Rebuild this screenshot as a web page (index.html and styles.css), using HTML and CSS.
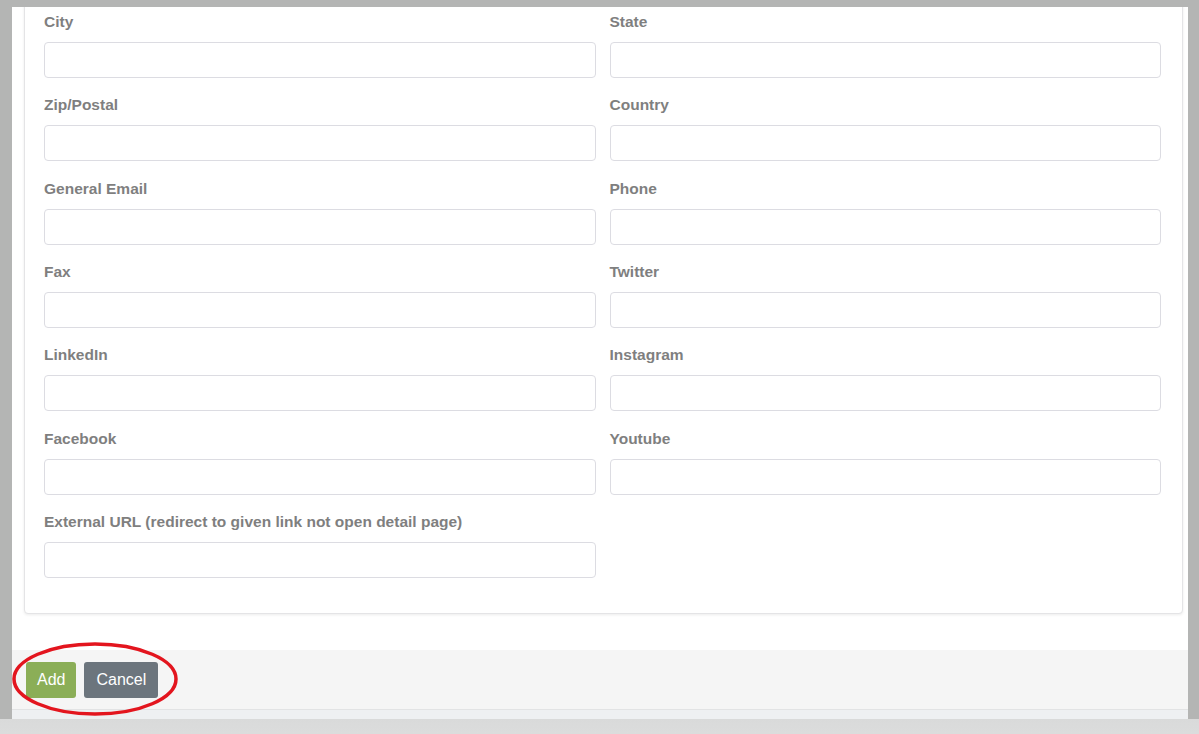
FILE: index.html
```html
<!DOCTYPE html>
<html lang="en">
<head>
    <meta charset="UTF-8">
    <meta name="viewport" content="width=device-width, initial-scale=1.0">
    <title>Add Listing</title>
    <link rel="stylesheet" href="styles.css">
</head>
<body>
    <div class="modal">
        <div class="modal-body">
            <div class="card">
                <div class="form-grid">
                    <div class="form-group">
                        <label for="city">City</label>
                        <input type="text" id="city">
                    </div>
                    <div class="form-group">
                        <label for="state">State</label>
                        <input type="text" id="state">
                    </div>
                    <div class="form-group">
                        <label for="zip">Zip/Postal</label>
                        <input type="text" id="zip">
                    </div>
                    <div class="form-group">
                        <label for="country">Country</label>
                        <input type="text" id="country">
                    </div>
                    <div class="form-group">
                        <label for="email">General Email</label>
                        <input type="email" id="email">
                    </div>
                    <div class="form-group">
                        <label for="phone">Phone</label>
                        <input type="tel" id="phone">
                    </div>
                    <div class="form-group">
                        <label for="fax">Fax</label>
                        <input type="text" id="fax">
                    </div>
                    <div class="form-group">
                        <label for="twitter">Twitter</label>
                        <input type="url" id="twitter">
                    </div>
                    <div class="form-group">
                        <label for="linkedin">LinkedIn</label>
                        <input type="url" id="linkedin">
                    </div>
                    <div class="form-group">
                        <label for="instagram">Instagram</label>
                        <input type="url" id="instagram">
                    </div>
                    <div class="form-group">
                        <label for="facebook">Facebook</label>
                        <input type="url" id="facebook">
                    </div>
                    <div class="form-group">
                        <label for="youtube">Youtube</label>
                        <input type="url" id="youtube">
                    </div>
                    <div class="form-group">
                        <label for="externalUrl">External URL (redirect to given link not open detail page)</label>
                        <input type="url" id="externalUrl">
                    </div>
                </div>
            </div>
        </div>
        <div class="modal-footer">
            <button type="submit" class="btn btn-add">Add</button>
            <button type="button" class="btn btn-cancel">Cancel</button>
            <!-- red marker drawn over the buttons -->
            <svg class="marker" width="172" height="80" viewBox="0 0 172 80">
                <ellipse cx="84" cy="38" rx="81" ry="35" fill="none" stroke="#e3151e" stroke-width="3.5"/>
            </svg>
        </div>
        <div class="modal-edge"></div>
    </div>
    <div class="page-bottom"></div>
</body>
</html>
```

FILE: styles.css
```css
body {
    margin: 0;
    padding: 7px 11px 0 12px;
    background: #b4b5b4;
    font-family: 'Liberation Sans', Arial, sans-serif;
    height: 734px;
    box-sizing: border-box;
    overflow: hidden;
}

.modal {
    background: #fff;
}

.modal-body {
    overflow: hidden;
    padding: 0 5px 36px 12px;
}

.card {
    margin-top: -20px;
    padding: 24px 21px 35px 19px;
    border: 1px solid #e4e4e6;
    border-radius: 4px;
    box-shadow: 0 1px 3px rgba(0, 0, 0, 0.08);
    background: #fff;
}

.form-grid {
    display: grid;
    grid-template-columns: 1fr 1fr;
    column-gap: 14px;
}

.form-group {
    margin-bottom: 17.33px;
}

.form-group:last-child {
    margin-bottom: 0;
}

label {
    display: block;
    font-size: 15.5px;
    line-height: 20px;
    font-weight: bold;
    color: #7f7f7f;
    margin-bottom: 10px;
}

input {
    display: block;
    width: 100%;
    height: 36px;
    box-sizing: border-box;
    border: 1px solid #dcdce2;
    border-radius: 4px;
    background: #fff;
    padding: 6px 12px;
    font-size: 14px;
}

.modal-footer {
    position: relative;
    background: #f5f5f5;
    padding: 12px 14px 11px;
    border-bottom: 1px solid #e2e3e4;
    display: flex;
    gap: 8px;
}

.btn {
    height: 36px;
    border: none;
    border-radius: 3px;
    color: #fff;
    font-family: 'Liberation Sans', Arial, sans-serif;
    font-size: 16px;
    cursor: pointer;
}

.btn-add {
    background: #8bae57;
    padding: 0 11px;
}

.btn-cancel {
    background: #6c757d;
    padding: 0 12px;
}

.marker {
    position: absolute;
    left: -1px;
    top: -9px;
}

.modal-edge {
    height: 9px;
    background: #eef0f2;
}

.page-bottom {
    height: 20px;
    margin: 0 -11px 0 -12px;
    background: linear-gradient(#d9dada, #dcdddd);
}
```
